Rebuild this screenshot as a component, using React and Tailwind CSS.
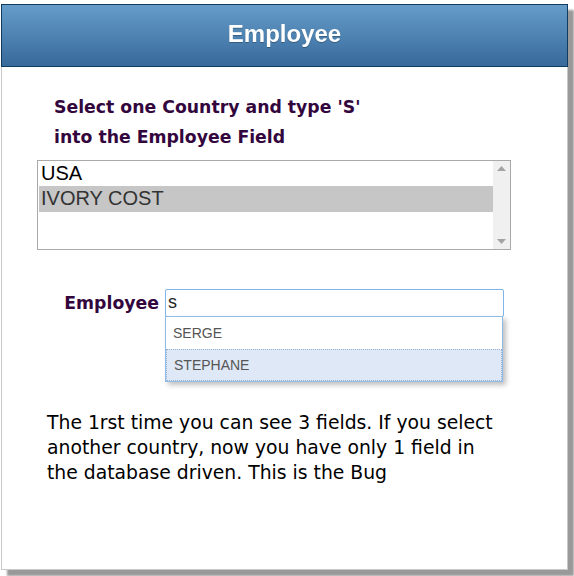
export default function App() {
  return (
    <div className="w-[574px] h-[576px] bg-white pt-[4px] pl-[1px] overflow-hidden">
      <div className="w-[567px] h-[566px] flex flex-col bg-white shadow-[6px_6px_2px_rgba(0,0,0,0.4)]">
        {/* Title bar */}
        <div className="h-[63px] shrink-0 flex items-center justify-center pb-[3px] border border-[#0e3b5f] bg-gradient-to-b from-[#659cc8] to-[#386a9c]">
          <span className="text-white text-[24px] font-bold font-['Liberation_Sans',Arial,sans-serif] drop-shadow-[0_1px_0_rgba(0,0,0,0.25)]">
            Employee
          </span>
        </div>

        {/* Body */}
        <div className="flex-1 flex flex-col border-x border-b border-[#c9c9c9] font-['DejaVu_Sans',Tahoma,sans-serif]">
          <p className="mt-[25px] ml-[52px] text-[17.3px] leading-[30px] font-bold text-[#33073d]">
            Select one Country and type 'S'
            <br />
            into the Employee Field
          </p>

          {/* Country list */}
          <div className="mt-[8px] ml-[35px] w-[474px] h-[90px] flex border border-[#a9a9a9] font-['Liberation_Sans',Arial,sans-serif] text-[20px] leading-[25px]">
            <div className="flex-1 pl-[1px]">
              <div className="pl-[2px] h-[25px] text-black">USA</div>
              <div className="pl-[2px] h-[26px] bg-[#c6c6c6] text-[#333]">IVORY COST</div>
            </div>
            <div className="w-[17px] bg-[#f0f0f0] flex flex-col justify-between items-center py-[5px]">
              <svg width="9" height="5" viewBox="0 0 9 5">
                <path d="M4.5 0 L9 5 L0 5 Z" fill="#a3a3a3" />
              </svg>
              <svg width="9" height="5" viewBox="0 0 9 5">
                <path d="M0 0 L9 0 L4.5 5 Z" fill="#a3a3a3" />
              </svg>
            </div>
          </div>

          {/* Employee field */}
          <div className="mt-[39px] ml-[60px] flex items-start">
            <span className="w-[103px] pr-[6px] text-right text-[17.3px] font-bold text-[#33073d] leading-[28px] whitespace-nowrap">
              Employee
            </span>
            <div className="relative w-[339px]">
              <div className="h-[28px] border border-[#7fb5ea] rounded-[2px] pl-[2px] text-[18px] leading-[24px] text-[#222] font-['Liberation_Sans',Arial,sans-serif]">
                s
              </div>
              <div className="absolute left-0 top-[27px] w-[338px] border border-[#8ebbe8] bg-white shadow-[3px_3px_5px_rgba(0,0,0,0.25)] font-['Liberation_Sans',Arial,sans-serif] text-[14px] text-[#555]">
                <div className="h-[32px] flex items-center pl-[7px]">SERGE</div>
                <div className="h-[32px] flex items-center pl-[7px] bg-[#dfe8f6] border border-dotted border-[#9ab3d3]">STEPHANE</div>
              </div>
            </div>
          </div>

          <p className="mt-[93px] ml-[45px] text-[18.8px] leading-[25px] text-black">
            The 1rst time you can see 3 fields. If you select
            <br />
            another country, now you have only 1 field in
            <br />
            the database driven. This is the Bug
          </p>
        </div>
      </div>
    </div>
  );
}
